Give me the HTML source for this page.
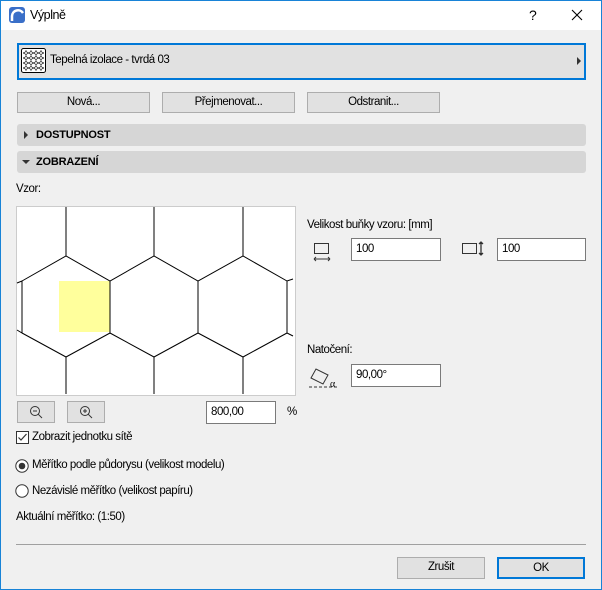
<!DOCTYPE html>
<html><head><meta charset="utf-8"><style>
*{box-sizing:border-box;margin:0;padding:0}
body{width:602px;height:590px;background:#f0f0f0;font-family:"Liberation Sans",sans-serif;font-size:11.5px;letter-spacing:-0.45px;color:#000;position:relative;overflow:hidden}
.a{position:absolute}
.win{left:0;top:0;width:602px;height:590px;border:1px solid #1883d7}
.title{left:1px;top:1px;width:600px;height:29px;background:#fff}
.btn{position:absolute;background:#e1e1e1;border:1px solid #adadad;text-align:center;line-height:19px}
.bar{position:absolute;left:17px;width:569px;height:22px;background:#d6d6d6;border-radius:3px;font-weight:bold;font-size:11px;line-height:22px;padding-left:19px;letter-spacing:-0.2px}
.inp{position:absolute;background:#fff;border:1px solid #7a7a7a;height:23px;line-height:21px;padding-left:4px}
</style></head><body>
<div class="a win"></div>
<div class="a title"></div>
<svg class="a" style="left:9px;top:7px" width="16" height="16"><rect width="16" height="16" rx="3" fill="#3a6fc8"/><path d="M3 14 V9 A6 6 0 0 1 14 6" stroke="#fff" stroke-width="2.5" fill="none"/></svg>
<div class="a" style="left:30px;top:8px;font-size:12.5px">Výplně</div>
<div class="a" style="left:529px;top:7px;font-size:14px">?</div>
<svg class="a" style="left:571px;top:9px" width="12" height="12"><path d="M1 1L11 11M11 1L1 11" stroke="#000" stroke-width="1.1"/></svg>

<div class="a" style="left:17px;top:43px;width:569px;height:37px;background:#e1e1e1;border:2px solid #0078d7"></div>
<svg class="a" style="left:21px;top:48px" width="25" height="25"><defs><pattern id="h" width="5" height="5" patternUnits="userSpaceOnUse"><path d="M0 1.5L2.5 0L5 1.5V3.5L2.5 5L0 3.5Z" fill="none" stroke="#000" stroke-width=".6"/></pattern></defs><rect x=".5" y=".5" width="24" height="24" rx="2" fill="#fff" stroke="#000"/><rect x="2" y="2" width="21" height="21" fill="url(#h)"/></svg>
<div class="a" style="left:50px;top:54px">Tepelná izolace - tvrdá 03</div>
<svg class="a" style="left:577px;top:57px" width="5" height="8"><path d="M0 0L4 4L0 8Z" fill="#333"/></svg>

<div class="btn" style="left:17px;top:92px;width:133px;height:21px">Nová...</div>
<div class="btn" style="left:162px;top:92px;width:133px;height:21px">Přejmenovat...</div>
<div class="btn" style="left:307px;top:92px;width:133px;height:21px">Odstranit...</div>

<div class="bar" style="top:124px">DOSTUPNOST</div>
<svg class="a" style="left:24px;top:131px" width="5" height="8"><path d="M0 0L4 4L0 8Z" fill="#333"/></svg>
<div class="bar" style="top:151px">ZOBRAZENÍ</div>
<svg class="a" style="left:22px;top:160px" width="8" height="5"><path d="M0 0L8 0L4 4Z" fill="#333"/></svg>

<div class="a" style="left:16px;top:183px">Vzor:</div>
<svg class="a" style="left:16px;top:206px" width="280" height="190"><rect x=".5" y=".5" width="279" height="189" fill="#fff" stroke="#ccc"/>
<rect x="43" y="75" width="51" height="51" fill="#ffff9c"/>
<g fill="none" stroke="#000" stroke-width="1" transform="translate(-16,-206)">
<path d="M66 207V256M154 207V256M243 207V256M66 357V394M154 357V394M243 357V394"/>
<path d="M17 283L22 281V333L17 330M22 281L66 256L110 281L154 256L198 281L243 256L287 281L293 279M22 333L66 357L110 333L154 357L198 333L243 357L287 333L293 336M110 281V333M198 281V333M287 281V333"/>
</g></svg>

<div class="btn" style="left:17px;top:401px;width:38px;height:22px"></div>
<svg class="a" style="left:28px;top:404px" width="16" height="16"><circle cx="7" cy="7" r="4.5" fill="none" stroke="#333"/><path d="M5 7H9M10.3 10.3L14 14" stroke="#333"/></svg>
<div class="btn" style="left:67px;top:401px;width:38px;height:22px"></div>
<svg class="a" style="left:78px;top:404px" width="16" height="16"><circle cx="7" cy="7" r="4.5" fill="none" stroke="#333"/><path d="M5 7H9M7 5V9M10.3 10.3L14 14" stroke="#333"/></svg>
<div class="inp" style="left:206px;top:401px;width:70px">800,00</div>
<div class="a" style="left:287px;top:406px">%</div>

<div class="a" style="left:307px;top:219px">Velikost buňky vzoru: [mm]</div>
<svg class="a" style="left:313px;top:240px" width="18" height="22"><rect x="1.5" y="3.5" width="14" height="10" fill="none" stroke="#333"/><path d="M1 19H17M1 19L3 17M1 19L3 21M17 19L15 17M17 19L15 21" stroke="#333"/></svg>
<div class="inp" style="left:351px;top:238px;width:90px">100</div>
<svg class="a" style="left:461px;top:240px" width="24" height="16"><rect x="1.5" y="3.5" width="14" height="10" fill="none" stroke="#333"/><path d="M20 2V15M18 4L20 2L22 4M18 13L20 15L22 13" stroke="#333" stroke-width="1.3"/></svg>
<div class="inp" style="left:497px;top:238px;width:89px">100</div>

<div class="a" style="left:307px;top:344px">Natočení:</div>
<svg class="a" style="left:307px;top:362px" width="36" height="28"><path d="M2 25H30" stroke="#333" stroke-dasharray="3,2"/><path d="M4 20L9 11L21 17L16 26Z" fill="none" stroke="#333" transform="translate(0,-4)"/><text x="23" y="25" font-size="10" font-family="Liberation Serif">α</text></svg>
<div class="inp" style="left:351px;top:364px;width:90px">90,00°</div>

<svg class="a" style="left:16px;top:431px" width="13" height="13"><rect x=".5" y=".5" width="12" height="12" fill="#fff" stroke="#333"/><path d="M2.5 6.5L5 9L10.5 3" fill="none" stroke="#333" stroke-width="1.2"/></svg>
<div class="a" style="left:32px;top:431px">Zobrazit jednotku sítě</div>
<svg class="a" style="left:15px;top:459px" width="14" height="14"><circle cx="7" cy="7" r="6.2" fill="#fff" stroke="#333"/><circle cx="7" cy="7" r="3.3" fill="#333"/></svg>
<div class="a" style="left:32px;top:459px">Měřítko podle půdorysu (velikost modelu)</div>
<svg class="a" style="left:15px;top:484px" width="14" height="14"><circle cx="7" cy="7" r="6.2" fill="#fff" stroke="#333"/></svg>
<div class="a" style="left:32px;top:485px">Nezávislé měřítko (velikost papíru)</div>
<div class="a" style="left:16px;top:511px">Aktuální měřítko: (1:50)</div>

<div class="a" style="left:16px;top:544px;width:570px;height:1px;background:#a0a0a0"></div>
<div class="btn" style="left:397px;top:557px;width:88px;height:22px">Zrušit</div>
<div class="btn" style="left:497px;top:557px;width:88px;height:22px;border:2px solid #0078d7;line-height:18px">OK</div>
</body></html>
